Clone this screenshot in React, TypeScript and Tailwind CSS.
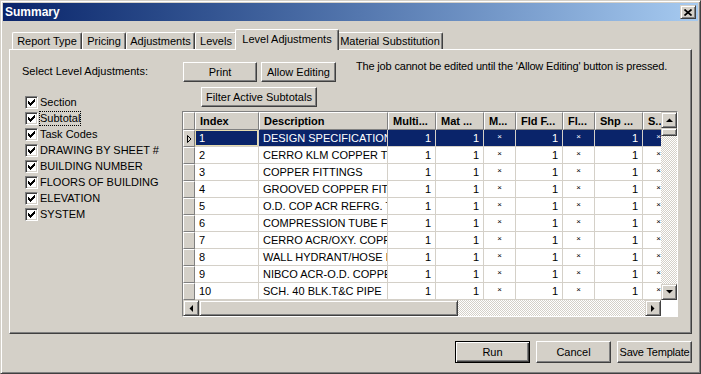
const raised =
  "bg-[#d4d0c8] border border-t-[#d4d0c8] border-l-[#d4d0c8] border-r-[#404040] border-b-[#404040] shadow-[inset_1px_1px_0_#fff,inset_-1px_-1px_0_#808080]";
const pushBtn =
  "bg-[#d4d0c8] border border-t-white border-l-white border-r-[#404040] border-b-[#404040] shadow-[inset_-1px_-1px_0_#808080] flex items-center justify-center whitespace-nowrap";
const hatch =
  "bg-[image:repeating-conic-gradient(#ffffff_0_25%,#d4d0c8_0_50%)] bg-[length:2px_2px]";

type Col = { w: number; label: string; kind: "text" | "num" | "x" };

const cols: Col[] = [
  { w: 64, label: "Index", kind: "text" },
  { w: 129, label: "Description", kind: "text" },
  { w: 48, label: "Multi...", kind: "num" },
  { w: 48, label: "Mat ...", kind: "num" },
  { w: 32, label: "M...", kind: "x" },
  { w: 47, label: "Fld F...", kind: "num" },
  { w: 32, label: "Fl...", kind: "x" },
  { w: 48, label: "Shp ...", kind: "num" },
  { w: 32, label: "S...", kind: "x" },
];

const rows = [
  "DESIGN SPECIFICATION",
  "CERRO KLM COPPER TUBE",
  "COPPER FITTINGS",
  "GROOVED COPPER FITTINGS",
  "O.D. COP ACR REFRG. TUBE",
  "COMPRESSION TUBE FITTINGS",
  "CERRO ACR/OXY. COPPER",
  "WALL HYDRANT/HOSE BIBB",
  "NIBCO ACR-O.D. COPPER",
  "SCH. 40 BLK.T&C PIPE",
];

const levels = [
  "Section",
  "Subtotal",
  "Task Codes",
  "DRAWING BY SHEET #",
  "BUILDING NUMBER",
  "FLOORS OF BUILDING",
  "ELEVATION",
  "SYSTEM",
];

const tabs = [
  { label: "Report Type", w: 70 },
  { label: "Pricing", w: 44 },
  { label: "Adjustments", w: 69 },
  { label: "Levels", w: 42 },
  { label: "Level Adjustments", w: 100, active: true },
  { label: "Material Substitution", w: 106 },
];

function Arrow({ dir }: { dir: "up" | "down" | "left" | "right" }) {
  const pts = {
    up: "0,4 7,4 3.5,0.5",
    down: "0,0 7,0 3.5,3.5",
    left: "4,0 4,7 0.5,3.5",
    right: "0,0 0,7 3.5,3.5",
  }[dir];
  const vert = dir === "up" || dir === "down";
  return (
    <svg width={vert ? 7 : 4} height={vert ? 4 : 7} viewBox={vert ? "0 0 7 4" : "0 0 4 7"}>
      <polygon points={pts} fill="#000" />
    </svg>
  );
}

function CheckBox() {
  return (
    <div className="w-[13px] h-[13px] shrink-0 bg-white border border-t-[#808080] border-l-[#808080] border-r-white border-b-white shadow-[inset_1px_1px_0_#404040,inset_-1px_-1px_0_#d4d0c8] flex items-center justify-center">
      <svg width="7" height="7" viewBox="0 0 7 7" shapeRendering="crispEdges">
        <path d="M6 0h1v3h-1v1h-1v1h-1v1h-1v1h-1v-1h-1v-1h-1v-3h1v1h1v1h1v-1h1v-1h1z" fill="#000" />
      </svg>
    </div>
  );
}

function Grid() {
  return (
    <div className="mt-[4px] w-[496px] h-[206px] border border-t-[#808080] border-l-[#808080] border-r-white border-b-white flex flex-col bg-white">
      <div className="flex h-[188px]">
        <div className="w-[478px] overflow-hidden">
          {/* header */}
          <div className="flex h-[18px]">
            <div className="w-[12px] shrink-0 border-t border-l border-white border-r border-b border-r-[#808080] border-b-[#808080] bg-[#d4d0c8]" />
            {cols.map((c) => (
              <div
                key={c.label}
                style={{ width: c.w }}
                className="shrink-0 bg-[#d4d0c8] border-t border-l border-white border-r border-b border-r-[#808080] border-b-[#808080] font-bold pl-[4px] flex items-center whitespace-nowrap overflow-hidden"
              >
                {c.label}
              </div>
            ))}
          </div>
          {rows.map((desc, i) => {
            const sel = i === 0;
            return (
              <div key={i} className="flex h-[17px]">
                <div className="w-[12px] shrink-0 bg-[#d4d0c8] border-t border-l border-white border-r border-b border-r-[#808080] border-b-[#808080] flex items-center justify-center">
                  {sel && (
                    <svg width="5" height="8" viewBox="0 0 5 8">
                      <polygon points="0.5,0.5 4,4 0.5,7.5" fill="none" stroke="#000" strokeWidth="1" />
                    </svg>
                  )}
                </div>
                {cols.map((c, j) => {
                  const val = j === 0 ? String(i + 1) : j === 1 ? desc : c.kind === "num" ? "1" : "×";
                  return (
                    <div
                      key={j}
                      style={{ width: c.w }}
                      className={
                        "shrink-0 border-r border-b border-[#d4d0c8] flex whitespace-nowrap overflow-hidden " +
                        (sel ? "bg-[#0a246a] text-white " : "bg-white ") +
                        (sel && j === 0 ? "shadow-[inset_0_0_0_1px_#e6dcae] " : "") +
                        (c.kind === "num"
                          ? "items-center justify-end pr-[4px]"
                          : c.kind === "x"
                          ? "items-start justify-center pt-[2px] text-[8px] leading-[9px]"
                          : "items-center pl-[4px]")
                      }
                    >
                      {val}
                    </div>
                  );
                })}
              </div>
            );
          })}
        </div>
        {/* vertical scrollbar */}
        <div className="w-[16px] flex flex-col">
          <div className={raised + " h-[16px] flex items-center justify-center"}>
            <Arrow dir="up" />
          </div>
          <div className={raised + " h-[8px]"} />
          <div className={"flex-1 " + hatch} />
          <div className={raised + " h-[16px] flex items-center justify-center"}>
            <Arrow dir="down" />
          </div>
        </div>
      </div>
      {/* horizontal scrollbar */}
      <div className="flex h-[16px]">
        <div className="w-[478px] flex">
          <div className={raised + " w-[16px] flex items-center justify-center"}>
            <Arrow dir="left" />
          </div>
          <div className={raised + " w-[259px]"} />
          <div className={"flex-1 " + hatch} />
          <div className={raised + " w-[16px] flex items-center justify-center"}>
            <Arrow dir="right" />
          </div>
        </div>
        <div className="w-[16px] bg-white" />
      </div>
    </div>
  );
}

export default function App() {
  return (
    <div className="w-[701px] h-[374px] bg-[#d4d0c8] border border-t-[#d4d0c8] border-l-[#d4d0c8] border-r-[#404040] border-b-[#404040] shadow-[inset_1px_1px_0_#fff,inset_-1px_-1px_0_#808080] p-[2px] font-['Liberation_Sans',Arial,sans-serif] text-[11px] leading-[13px] text-black flex flex-col overflow-hidden">
      {/* title bar */}
      <div className="h-[18px] shrink-0 bg-linear-to-r from-[#0a246a] to-[#a6caf0] flex items-center pl-[2px] pr-[2px]">
        <span className="text-white font-bold text-[12px]">Summary</span>
        <button className={raised + " ml-auto w-[16px] h-[14px] flex items-center justify-center"}>
          <svg width="8" height="7" viewBox="0 0 8 7">
            <path d="M0.5 0.5L7.5 6.5M7.5 0.5L0.5 6.5" stroke="#000" strokeWidth="1.7" />
          </svg>
        </button>
      </div>

      <div className="flex-1 px-[6px] pt-[8px] flex flex-col">
        {/* tabs */}
        <div className="flex items-end h-[20px] pl-[3px]">
          {tabs.map((t) =>
            t.active ? (
              <div
                key={t.label}
                style={{ width: t.w + 4 }}
                className="relative z-10 -mx-[2px] mb-[-1px] h-[21px] bg-[#d4d0c8] border-t border-l border-r border-t-white border-l-white border-r-[#404040] shadow-[inset_-1px_0_0_#808080] rounded-t-[2px] flex items-center justify-center pb-[1px] whitespace-nowrap"
              >
                {t.label}
              </div>
            ) : (
              <div
                key={t.label}
                style={{ width: t.w }}
                className="h-[17px] bg-[#d4d0c8] border-t border-l border-r border-t-white border-l-white border-r-[#404040] shadow-[inset_-1px_0_0_#808080] rounded-t-[2px] flex items-center justify-center whitespace-nowrap"
              >
                {t.label}
              </div>
            )
          )}
        </div>

        {/* panel */}
        <div className="h-[285px] border border-t-white border-l-white border-r-[#404040] border-b-[#404040] shadow-[inset_-1px_-1px_0_#808080] flex">
          <div className="w-[172px] shrink-0 pl-[12px] pt-[15px]">
            <div>Select Level Adjustments:</div>
            <div className="mt-[16px] pl-[3px] flex flex-col">
              {levels.map((l) => (
                <div key={l} className="h-[16px] flex items-center gap-px">
                  <CheckBox />
                  <span
                    className={
                      "border px-0 leading-[13px] " +
                      (l === "Subtotal" ? "border-dotted border-black" : "border-transparent")
                    }
                  >
                    {l}
                  </span>
                </div>
              ))}
            </div>
          </div>

          <div className="flex flex-col pt-[12px]">
            <div className="flex">
              <button className={pushBtn + " ml-px w-[74px] h-[20px]"}>Print</button>
              <button className={pushBtn + " ml-[4px] w-[75px] h-[20px]"}>Allow Editing</button>
              <span className="ml-[20px] -mt-[2px] whitespace-nowrap tracking-[-0.17px]">
                The job cannot be edited until the 'Allow Editing' button is pressed.
              </span>
            </div>
            <button className={pushBtn + " ml-[19px] mt-[5px] w-[116px] h-[20px]"}>
              Filter Active Subtotals
            </button>
            <Grid />
          </div>
        </div>

        {/* dialog buttons */}
        <div className="mt-[7px] flex justify-end gap-[6px]">
          <button className="w-[75px] h-[22px] bg-[#d4d0c8] border border-black shadow-[inset_1px_1px_0_#fff,inset_-1px_-1px_0_#404040,inset_-2px_-2px_0_#808080] flex items-center justify-center">
            Run
          </button>
          <button className={pushBtn + " w-[75px] h-[22px]"}>Cancel</button>
          <button className={pushBtn + " w-[75px] h-[22px] tracking-[-0.2px]"}>Save Template</button>
        </div>
      </div>
    </div>
  );
}
